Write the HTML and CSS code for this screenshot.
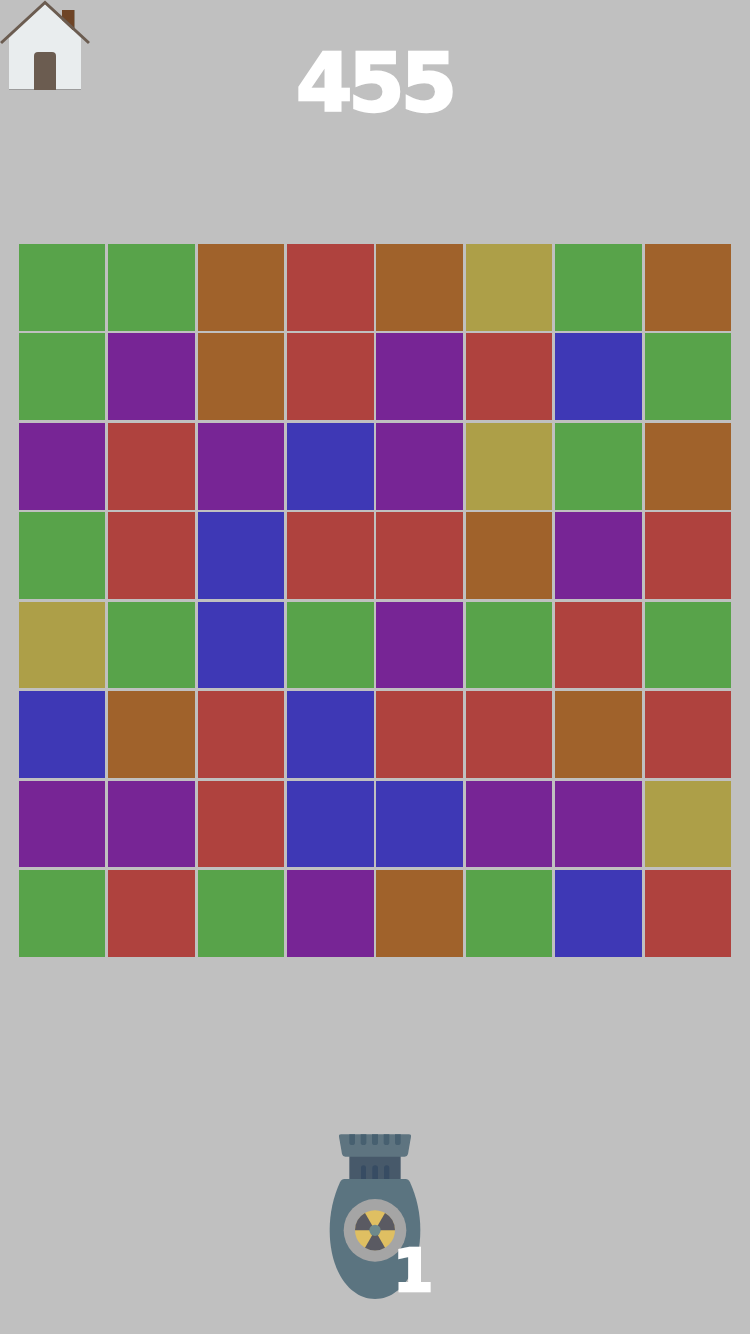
FILE: index.html
```html
<!DOCTYPE html>
<html lang="en">
<head>
<meta charset="utf-8">
<title>455</title>
<link rel="stylesheet" href="styles.css">
</head>
<body>
<header class="top">
  <a class="home" aria-label="Home">
    <svg class="home-icon" viewBox="0 0 90 90" width="90" height="90">
      <path d="M62 10h12.500v20H62z" fill="#6e4426"/>
      <path d="M74 10h1v19h-1z" fill="#8c8276"/>
      <path d="M9 38 45 4l36 34v51H9z" fill="#e9edee"/>
      <path d="M9 89h72v1H9z" fill="#9c9c9c"/>
      <path d="M34 90V56q0-4 4-4h14q4 0 4 4v34z" fill="#6b5c50"/>
      <path d="M1 43 45 2.500 89 43" fill="none" stroke="#6b5c50" stroke-width="3"/>
    </svg>
  </a>
  <div class="score">455</div>
</header>
<main class="board">
  <i class="c g"></i><i class="c g"></i><i class="c n"></i><i class="c r"></i><i class="c n"></i><i class="c o"></i><i class="c g"></i><i class="c n"></i>
  <i class="c g"></i><i class="c p"></i><i class="c n"></i><i class="c r"></i><i class="c p"></i><i class="c r"></i><i class="c b"></i><i class="c g"></i>
  <i class="c p"></i><i class="c r"></i><i class="c p"></i><i class="c b"></i><i class="c p"></i><i class="c o"></i><i class="c g"></i><i class="c n"></i>
  <i class="c g"></i><i class="c r"></i><i class="c b"></i><i class="c r"></i><i class="c r"></i><i class="c n"></i><i class="c p"></i><i class="c r"></i>
  <i class="c o"></i><i class="c g"></i><i class="c b"></i><i class="c g"></i><i class="c p"></i><i class="c g"></i><i class="c r"></i><i class="c g"></i>
  <i class="c b"></i><i class="c n"></i><i class="c r"></i><i class="c b"></i><i class="c r"></i><i class="c r"></i><i class="c n"></i><i class="c r"></i>
  <i class="c p"></i><i class="c p"></i><i class="c r"></i><i class="c b"></i><i class="c b"></i><i class="c p"></i><i class="c p"></i><i class="c o"></i>
  <i class="c g"></i><i class="c r"></i><i class="c g"></i><i class="c p"></i><i class="c n"></i><i class="c g"></i><i class="c b"></i><i class="c r"></i>
</main>
<footer class="tray">
  <div class="bomb">
    <svg class="bomb-icon" viewBox="0 0 390 540" width="130" height="180">
      <path d="M118 90h154v80H118z" fill="#47596a"/>
      <path d="M93 28h204q7 0 6 7l-9 52q-2 8-10 8H106q-8 0-10-8l-9-52q-1-7 6-7z" fill="#5e7480"/>
      <g fill="#476070">
        <path d="M118 28h17v25q0 7-8.500 7T118 53z"/>
        <path d="M152 28h17v25q0 7-8.500 7T152 53z"/>
        <path d="M186 28h18v25q0 7-9 7t-9-7z"/>
        <path d="M221 28h17v25q0 7-8.500 7T221 53z"/>
        <path d="M255 28h17v25q0 7-8.500 7T255 53z"/>
      </g>
      <g fill="#374c63">
        <path d="M153 162v-33q0-8 7.500-8t7.500 8v33z"/>
        <path d="M187 162v-33q0-8 8.500-8t8.500 8v33z"/>
        <path d="M222 162v-33q0-8 8-8t8 8v33z"/>
      </g>
      <path d="M103 162H287Q295 162 300 172C320 215 331 265 331 315C331 440 270 522 195 522C120 522 59 440 59 315C59 265 70 215 90 172Q95 162 103 162Z" fill="#5b7480"/>
      <circle cx="195" cy="316" r="94" fill="#a5a5a5"/>
      <circle cx="195" cy="316" r="60" fill="#dfbf62"/>
      <g fill="#5a5a62">
        <path d="M195 316H255A60 60 0 0 0 225 264Z"/>
        <path d="M195 316H135A60 60 0 0 1 165 264Z"/>
        <path d="M195 316 225 368A60 60 0 0 1 165 368Z"/>
      </g>
      <circle cx="195" cy="316" r="17" fill="#6e8a8c"/>
    </svg>
    <span class="count">1</span>
  </div>
</footer>
</body>
</html>
```
FILE: styles.css
```css
* { box-sizing: border-box; }
html, body { margin: 0; padding: 0; }
body {
  width: 750px;
  height: 1334px;
  background: #c0c0c0;
  overflow: hidden;
  font-family: "DejaVu Sans", sans-serif;
  font-weight: 700;
  color: #fff;
}
.top {
  position: relative;
  height: 244px;
  display: flex;
  justify-content: center;
  align-items: flex-start;
}
.home { position: absolute; left: 0; top: 0; display: block; width: 90px; height: 90px; }
.home-icon { display: block; }
.score {
  font-size: 81px;
  line-height: 100px;
  margin-top: 33px;
  margin-right: 1px;
  -webkit-text-stroke: 2.5px #fff;
  letter-spacing: -4px;
}
.board {
  width: 713px;
  margin-left: 18.7px;
  display: grid;
  grid-template-columns: repeat(8, 86.6px);
  grid-auto-rows: 86.7px;
  gap: 2.76px 2.83px;
}
.c { display: block; }
.g { background: #58a34a; }
.n { background: #a0622b; }
.r { background: #af423e; }
.o { background: #ad9f48; }
.p { background: #772595; }
.b { background: #3e38b5; }
.tray {
  display: flex;
  justify-content: center;
  padding-top: 168px;
}
.bomb { position: relative; width: 130px; height: 180px; }
.bomb-icon { display: block; }
.count {
  position: absolute;
  left: 83px;
  top: 106px;
  font-size: 58px;
  line-height: 80px;
  -webkit-text-stroke: 2.5px #fff;
}
```
